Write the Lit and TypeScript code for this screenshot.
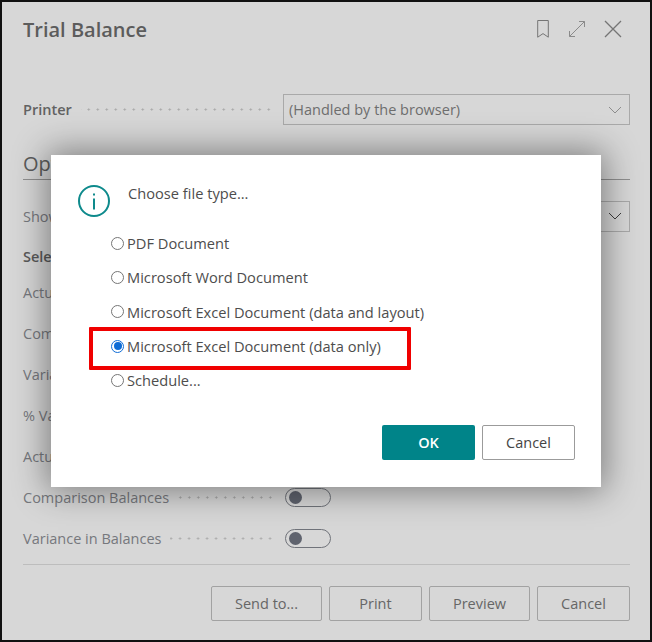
import { LitElement, html, css, nothing } from "lit";
import { customElement } from "lit/decorators.js";

const chevron = (cls: string) => html`<svg class=${cls} width="14" height="8" viewBox="0 0 14 8"><path d="M1 1l6 6 6-6" fill="none" stroke="currentColor"/></svg>`;

@customElement("app-root")
export class AppRoot extends LitElement {
  static styles = css`
    :host {
      display: block;
      width: 652px;
      height: 642px;
      font-family: "Open Sans", "Noto Sans", sans-serif;
      font-size: 14.5px;
      color: #76787d;
    }
    * { box-sizing: border-box; }
    .page {
      position: relative;
      width: 652px;
      height: 642px;
      border: 2px solid #111;
      background: #d7d7d7;
      padding: 0 20px 0 21px;
      overflow: hidden;
    }
    .head { display: flex; align-items: center; height: 54px; }
    .title { flex: 1; font-size: 20px; font-weight: 600; color: #5c5c5c; }
    .icons { display: flex; align-items: center; color: #757575; margin-right: 8px; }
    .icons svg { display: block; }
    .bookmark { margin-right: 19px; margin-top: -1px; }
    .expand { margin-right: 18px; color: #8a8a8a; }
    .row { display: flex; align-items: center; height: 41px; }
    .printer { margin-top: 38px; height: 31px; color: #626262; }
    .printer .label { font-weight: 600; }
    .label { white-space: nowrap; }
    .leader {
      height: 3px;
      background: radial-gradient(circle at center, #a8a8a8 0.9px, transparent 1.2px) right center / 9px 3px repeat-x;
    }
    .fill { flex: 1; margin: 0 10px 0 9px; }
    .select {
      flex: none;
      width: 347px;
      height: 31px;
      border: 1px solid #a9a9a9;
      display: flex;
      align-items: center;
      justify-content: space-between;
      padding: 0 7px 0 5px;
      color: #6e6e6e;
    }
    .chev { color: #8c8c8c; }
    .chev-dark { color: #3d3d3d; }
    .section {
      margin-top: 19px;
      height: 36px;
      border-bottom: 1px solid #8f8f8f;
      font-size: 20px;
      color: #5c5c5c;
      line-height: 40px;
    }
    .opts { margin-top: 16px; }
    .show { height: 40px; }
    .sub { height: 40px; font-weight: 600; color: #5a5a5a; }
    .toggle {
      flex: none;
      width: 46px;
      height: 19px;
      border: 1px solid #70737a;
      border-radius: 10px;
      padding: 2px 3px;
      margin-right: 299px;
    }
    .toggle i { display: block; width: 13px; height: 13px; border-radius: 50%; background: #5f636e; }
    .rows { margin-top: -4px; }
    .foot {
      position: absolute;
      left: 21px;
      right: 20px;
      top: 562px;
      border-top: 1px solid #bdbdbd;
      padding-top: 21px;
      display: flex;
      justify-content: flex-end;
      gap: 7px;
    }
    .btn {
      height: 35px;
      border: 1px solid #a2a2a2;
      border-radius: 2px;
      background: transparent;
      font: inherit;
      color: #666;
      padding: 0;
    }
    .w111 { width: 111px; }
    .w93 { width: 93px; }
    .w101 { width: 101px; }
    .modal {
      position: absolute;
      left: 49px;
      top: 153px;
      width: 550px;
      height: 332px;
      background: #fff;
      box-shadow: 0 0 32px 4px rgba(0, 0, 0, 0.42);
      padding: 27px 26px 0 27px;
      color: #4d4d4d;
      font-size: 14.65px;
    }
    .msg { display: flex; align-items: flex-start; gap: 18px; height: 44px; }
    .msg span { line-height: 22px; }
    .msg svg { display: block; margin-top: 3px; }
    .opt { position: relative; display: flex; align-items: center; gap: 3px; height: 34.3px; margin-left: 33px; white-space: nowrap; }
    .radio { width: 13px; height: 13px; border-radius: 50%; border: 1.3px solid #767676; background: #fff; flex: none; }
    .radio.on { border-color: #0f6cd6; display: flex; align-items: center; justify-content: center; }
    .radio.on::after { content: ""; width: 8px; height: 8px; border-radius: 50%; background: #0f6cd6; }
    .mark {
      position: absolute;
      left: -22px;
      top: -2px;
      width: 322px;
      height: 43px;
      border: 4px solid #f00000;
      border-radius: 1px;
      pointer-events: none;
    }
    .actions {
      position: absolute;
      right: 26px;
      bottom: 27px;
      display: flex;
      gap: 7px;
    }
    .actions .btn { font-size: 14.5px; }
    .ok { background: #008489; border: none; font-weight: 600; }
    .actions .ok { color: #fff; }
    .actions .cancel { border-color: #9b9b9b; color: #444; background: #fff; }
  `;

  private optRow(label: string) {
    return html`<div class="row"><span class="label">${label}</span><span class="leader fill"></span><span class="toggle"><i></i></span></div>`;
  }

  render() {
    const options: string[] = [
      "PDF Document",
      "Microsoft Word Document",
      "Microsoft Excel Document (data and layout)",
      "Microsoft Excel Document (data only)",
      "Schedule...",
    ];
    const toggles = [
      "Actual Net Change",
      "Comparison Net Change",
      "Variance in Net Change",
      "% Variance in Net Change",
      "Actual Balances",
      "Comparison Balances",
      "Variance in Balances",
    ];
    return html`
      <div class="page">
        <div class="head">
          <span class="title">Trial Balance</span>
          <span class="icons">
            <svg class="bookmark" width="12" height="18" viewBox="0 0 12 18"><path d="M.7 .5h10.6v16.7l-5.3-3.6-5.3 3.6z" fill="none" stroke="currentColor"/></svg>
            <svg class="expand" width="18" height="18" viewBox="0 0 18 18"><path d="M1.5 16.5l15-15M11 1.5h5.5V7M1.5 11v5.5H7" fill="none" stroke="currentColor"/></svg>
            <svg width="18" height="18" viewBox="0 0 18 18"><path d="M1 1l16 16M17 1L1 17" fill="none" stroke="currentColor" stroke-width="1.3"/></svg>
          </span>
        </div>
        <div class="row printer">
          <span class="label">Printer</span>
          <span class="leader fill"></span>
          <span class="select"><span>(Handled by the browser)</span>${chevron("chev")}</span>
        </div>
        <div class="section">Options</div>
        <div class="opts">
          <div class="row show">
            <span class="label">Show Amounts</span>
            <span class="leader fill"></span>
            <span class="select"><span></span>${chevron("chev-dark")}</span>
          </div>
          <div class="row sub"><span class="label">Selected Columns</span></div>
          <div class="rows">${toggles.map((t) => this.optRow(t))}</div>
        </div>
        <div class="foot">
          <button class="btn w111">Send to...</button>
          <button class="btn w93">Print</button>
          <button class="btn w101">Preview</button>
          <button class="btn w93">Cancel</button>
        </div>
        <div class="modal">
          <div class="msg">
            <svg width="32" height="32" viewBox="0 0 32 32"><circle cx="16" cy="16" r="15" fill="none" stroke="#0e8a8c" stroke-width="2"/><path d="M16 8.5v2M16 13.5v11" stroke="#0e8a8c" stroke-width="2" fill="none"/></svg>
            <span>Choose file type...</span>
          </div>
          ${options.map((o, i) => html`<div class="opt"><span class="radio ${i === 3 ? "on" : ""}"></span><span>${o}</span>${i === 3 ? html`<span class="mark"></span>` : nothing}</div>`)}
          <div class="actions">
            <button class="btn w93 ok">OK</button>
            <button class="btn w93 cancel">Cancel</button>
          </div>
        </div>
      </div>
    `;
  }
}
